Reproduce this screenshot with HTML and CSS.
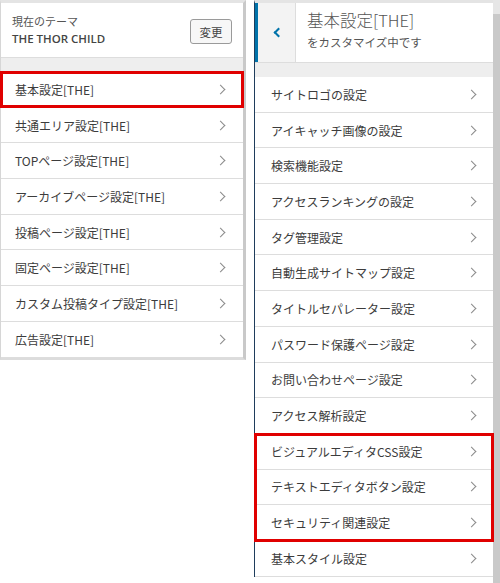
FILE: index.html
```html
<!DOCTYPE html>
<html lang="ja">
<head>
<meta charset="utf-8">
<link rel="stylesheet" href="styles.css">
</head>
<body>
<div class="wrap">
  <div class="left">
    <div class="theme">
      <div class="theme-info">
        <div class="theme-label">現在のテーマ</div>
        <div class="theme-name">THE THOR CHILD</div>
      </div>
      <button class="change">変更</button>
    </div>
    <div class="band"></div>
    <ul class="list">
      <li class="item hl"><span>基本設定[THE]</span><i class="chev"></i></li>
      <li class="item"><span>共通エリア設定[THE]</span><i class="chev"></i></li>
      <li class="item"><span>TOPページ設定[THE]</span><i class="chev"></i></li>
      <li class="item"><span>アーカイブページ設定[THE]</span><i class="chev"></i></li>
      <li class="item"><span>投稿ページ設定[THE]</span><i class="chev"></i></li>
      <li class="item"><span>固定ページ設定[THE]</span><i class="chev"></i></li>
      <li class="item"><span>カスタム投稿タイプ設定[THE]</span><i class="chev"></i></li>
      <li class="item"><span>広告設定[THE]</span><i class="chev"></i></li>
    </ul>
  </div>
  <div class="right">
    <div class="rmain">
      <div class="head">
        <div class="back"><i class="back-chev"></i></div>
        <div class="head-text">
          <div class="head-title">基本設定[THE]</div>
          <div class="head-sub">をカスタマイズ中です</div>
        </div>
      </div>
      <div class="band"></div>
      <ul class="list rlist">
        <li class="item"><span>サイトロゴの設定</span><i class="chev"></i></li>
        <li class="item"><span>アイキャッチ画像の設定</span><i class="chev"></i></li>
        <li class="item"><span>検索機能設定</span><i class="chev"></i></li>
        <li class="item"><span>アクセスランキングの設定</span><i class="chev"></i></li>
        <li class="item"><span>タグ管理設定</span><i class="chev"></i></li>
        <li class="item"><span>自動生成サイトマップ設定</span><i class="chev"></i></li>
        <li class="item"><span>タイトルセパレーター設定</span><i class="chev"></i></li>
        <li class="item"><span>パスワード保護ページ設定</span><i class="chev"></i></li>
        <li class="item"><span>お問い合わせページ設定</span><i class="chev"></i></li>
        <li class="item"><span>アクセス解析設定</span><i class="chev"></i></li>
        <li class="group">
          <ul class="list">
            <li class="item"><span>ビジュアルエディタCSS設定</span><i class="chev"></i></li>
            <li class="item"><span>テキストエディタボタン設定</span><i class="chev"></i></li>
            <li class="item"><span>セキュリティ関連設定</span><i class="chev"></i></li>
          </ul>
        </li>
        <li class="item"><span>基本スタイル設定</span><i class="chev"></i></li>
      </ul>
    </div>
    <div class="scroll"></div>
  </div>
</div>
</body>
</html>
```
FILE: styles.css
```css
* { box-sizing: border-box; }
html, body { margin: 0; padding: 0; }
body {
  width: 500px;
  height: 583px;
  overflow: hidden;
  background: #fff;
  font-family: "Noto Sans CJK JP", "Noto Sans", sans-serif;
  color: #3c3c3c;
}
.wrap {
  display: flex;
  align-items: flex-start;
}
.left {
  width: 246px;
  background: #eee;
  border-top: 3px solid #e4e4e4;
  border-left: 1px solid #d6d6d6;
  border-right: 3px solid #c9c9c9;
  border-bottom: 2px solid #dcdcdc;
}
.theme {
  height: 55px;
  background: #fff;
  display: flex;
  align-items: center;
  justify-content: space-between;
  padding: 0 11px 0 11px;
  border-bottom: 1px solid #ddd;
}
.theme-label {
  font-size: 11px;
  color: #555;
  line-height: 16px;
}
.theme-name {
  font-family: "Open Sans", "Noto Sans CJK JP", sans-serif;
  font-size: 11.5px;
  font-weight: 600;
  color: #444;
  line-height: 16px;
  margin-top: 2px;
}
.change {
  width: 42px;
  height: 25px;
  margin-top: 3px;
  border: 1px solid #9a9a9a;
  border-radius: 3px;
  background: #f7f7f7;
  font-family: "Noto Sans CJK JP", sans-serif;
  font-size: 11.5px;
  color: #444;
  padding: 0;
}
.band {
  height: 14px;
  background: #eee;
}
.list {
  list-style: none;
  margin: 0;
  padding: 0;
}
.item {
  height: 35.7px;
  background: #fff;
  border-bottom: 1px solid #ddd;
  display: flex;
  align-items: center;
  justify-content: space-between;
  padding: 0 17px 0 14px;
  font-size: 12px;
  color: #3c3c3c;
}
.chev {
  width: 7px;
  height: 7px;
  border-top: 1.5px solid #8a8a8a;
  border-right: 1.5px solid #8a8a8a;
  transform: rotate(45deg);
  margin-right: 2px;
}
.hl {
  position: relative;
}
.hl::after {
  content: "";
  position: absolute;
  left: -1px;
  right: -1px;
  top: -1px;
  bottom: -1px;
  border: 3px solid #e00000;
}
.right {
  margin-left: 8px;
  width: 246px;
  display: flex;
  align-items: flex-start;
}
.rmain {
  width: 239px;
  border-left: 1px solid #1f3d5c;
  background: #eee;
  border-top: 3px solid #e4e4e4;
}
.scroll {
  width: 7px;
  height: 583px;
  background: #c9c9c9;
  border-top: 14px solid #e6e6e6;
}
.head {
  height: 60px;
  display: flex;
  background: #fff;
  border-bottom: 1px solid #ddd;
}
.back {
  width: 41px;
  background: #f3f3f3;
  border-left: 3px solid #0073aa;
  border-right: 1px solid #ddd;
  display: flex;
  align-items: center;
  justify-content: center;
}
.back-chev {
  width: 7px;
  height: 7px;
  border-left: 2px solid #0073aa;
  border-bottom: 2px solid #0073aa;
  transform: rotate(45deg);
  margin-left: 3px;
}
.head-text {
  padding: 6px 0 0 11px;
}
.head-title {
  font-size: 16.5px;
  color: #555;
  line-height: 22px;
  font-weight: 300;
}
.head-sub {
  font-size: 11.5px;
  color: #555;
  line-height: 18px;
  margin-top: 2px;
}
.rlist .item {
  padding: 0 16px;
}
.group {
  outline: 3px solid #e00000;
  outline-offset: -2px;
  position: relative;
}
```
